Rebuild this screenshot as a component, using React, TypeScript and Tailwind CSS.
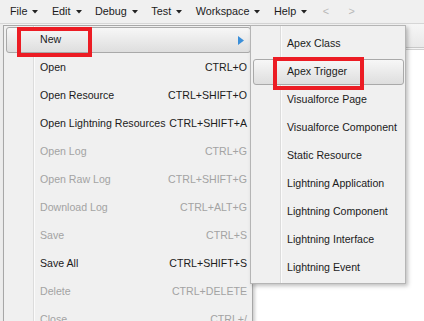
import React from 'react';

type Item = { label: string; shortcut?: string; disabled?: boolean; active?: boolean; sub?: boolean };

const fileItems: Item[] = [
  { label: 'New', active: true, sub: true },
  { label: 'Open', shortcut: 'CTRL+O' },
  { label: 'Open Resource', shortcut: 'CTRL+SHIFT+O' },
  { label: 'Open Lightning Resources', shortcut: 'CTRL+SHIFT+A' },
  { label: 'Open Log', shortcut: 'CTRL+G', disabled: true },
  { label: 'Open Raw Log', shortcut: 'CTRL+SHIFT+G', disabled: true },
  { label: 'Download Log', shortcut: 'CTRL+ALT+G', disabled: true },
  { label: 'Save', shortcut: 'CTRL+S', disabled: true },
  { label: 'Save All', shortcut: 'CTRL+SHIFT+S' },
  { label: 'Delete', shortcut: 'CTRL+DELETE', disabled: true },
  { label: 'Close', shortcut: 'CTRL+/', disabled: true },
];

const newItems = [
  'Apex Class',
  'Apex Trigger',
  'Visualforce Page',
  'Visualforce Component',
  'Static Resource',
  'Lightning Application',
  'Lightning Component',
  'Lightning Interface',
  'Lightning Event',
];

const menus = ['File', 'Edit', 'Debug', 'Test', 'Workspace', 'Help'];

function Caret() {
  return (
    <svg width="6" height="4" viewBox="0 0 6 4" className="mt-[1px]">
      <path d="M0 0 L6 0 L3 3.5 Z" fill="#222" />
    </svg>
  );
}

export default function App() {
  return (
    <div
      className="relative w-[424px] h-[321px] overflow-hidden bg-white text-[10.6px] text-[#1b1b1b]"
      style={{ fontFamily: '"Liberation Sans", Arial, sans-serif' }}
    >
      {/* Menu bar */}
      <div className="h-[24px] bg-[#f0f0f0] border-b border-[#d6d6d6] flex items-center pl-[10px] gap-[13.5px] text-[10.8px]">
        {menus.map((m) => (
          <div key={m} className="flex items-center gap-[5px]">
            <span>{m}</span>
            <Caret />
          </div>
        ))}
        <span className="ml-[2px] text-[#b8b8b8]">&lt;</span>
        <span className="ml-[6px] text-[#b8b8b8]">&gt;</span>
      </div>

      {/* Page underneath */}
      <div className="flex h-[297px]">
        <div className="w-[3px] bg-[#ececec]" />
        <div className="flex-1 flex flex-col">
          <div className="h-[24px] bg-gradient-to-b from-[#f6f6f6] to-[#e9e9e9] border-b border-[#c8c8c8]" />
          <div className="h-[2px] bg-[#f4f4f4] border-b border-[#d0d0d0]" />
          <div className="flex-1 bg-white" />
        </div>
      </div>

      {/* File menu */}
      <div className="absolute left-[3px] top-[25px] w-[250px] h-[310px] bg-[#f0f0f0] border border-[#a7a7a7] shadow-[2px_2px_3px_rgba(0,0,0,0.2)]">
        <div className="absolute left-[29px] top-0 bottom-0 w-[2px] border-l border-[#dcdcdc] bg-white/70" />
        <div className="relative flex flex-col">
          {fileItems.map((it) => (
            <div key={it.label} className="h-[28px] py-[1px] pl-[2px] pr-[1px]">
              <div
                className={
                  'h-[26px] flex items-center pl-[33px] pr-[3px] rounded-[3px] ' +
                  (it.active
                    ? 'border border-[#a9a9a9] bg-gradient-to-b from-[#f7f7f7] to-[#dedede]'
                    : 'border border-transparent') +
                  (it.disabled ? ' text-[#a3a3a3]' : ' text-[#1b1b1b]')
                }
              >
                <span className="flex-1 whitespace-nowrap">{it.label}</span>
                {it.shortcut && <span className="whitespace-nowrap">{it.shortcut}</span>}
                {it.sub && (
                  <svg width="6" height="9" viewBox="0 0 6 9" className="mr-[3px]">
                    <path d="M0 0 L6 4.5 L0 9 Z" fill="#3b8fd9" />
                  </svg>
                )}
              </div>
            </div>
          ))}
        </div>
      </div>

      {/* New submenu */}
      <div className="absolute left-[250px] top-[25px] w-[156px] h-[259px] bg-[#f0f0f0] border border-[#b5b5b5] shadow-[2px_2px_4px_rgba(0,0,0,0.25)] pt-[4px]">
        <div className="absolute left-[29px] top-0 bottom-0 w-[2px] border-l border-[#dcdcdc] bg-white/70" />
        <div className="relative flex flex-col">
          {newItems.map((label) => {
            const active = label === 'Apex Trigger';
            return (
              <div key={label} className="h-[28px] py-[1px] pl-[2px] pr-[1px]">
                <div
                  className={
                    'h-[26px] flex items-center pl-[33px] rounded-[3px] whitespace-nowrap ' +
                    (active
                      ? 'border border-[#a9a9a9] bg-gradient-to-b from-[#f7f7f7] to-[#dedede]'
                      : 'border border-transparent')
                  }
                >
                  {label}
                </div>
              </div>
            );
          })}
        </div>
      </div>

      {/* Red annotation boxes */}
      <div className="absolute left-[17px] top-[27px] w-[75px] h-[30px] border-[4px] border-[#ec1c24]" />
      <div className="absolute left-[273px] top-[57px] w-[91px] h-[33px] border-[4px] border-[#ec1c24]" />
    </div>
  );
}
